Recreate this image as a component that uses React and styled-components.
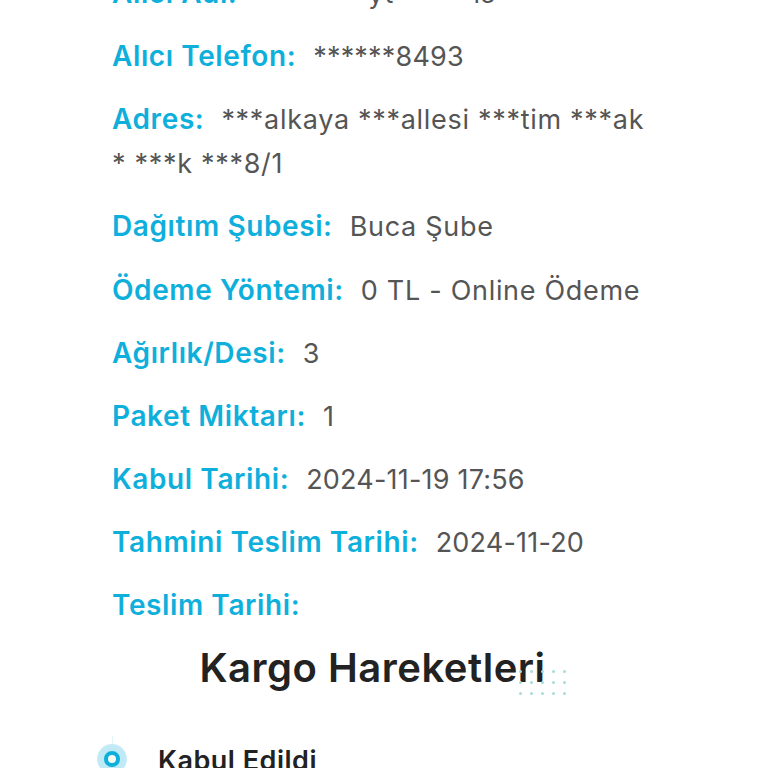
import React from 'react';
import styled, { createGlobalStyle } from 'styled-components';

const rows = [
	{ label: 'Alıcı Adı:', value: '********yt*** **ıs' },
	{ label: 'Alıcı Telefon:', value: '******8493', numeric: true },
	{ label: 'Adres:', value: '***alkaya ***allesi ***tim ***ak * ***k ***8/1' },
	{ label: 'Dağıtım Şubesi:', value: 'Buca Şube' },
	{ label: 'Ödeme Yöntemi:', value: '0 TL - Online Ödeme' },
	{ label: 'Ağırlık/Desi:', value: '3', numeric: true },
	{ label: 'Paket Miktarı:', value: '1', numeric: true },
	{ label: 'Kabul Tarihi:', value: '2024-11-19 17:56', numeric: true },
	{ label: 'Tahmini Teslim Tarihi:', value: '2024-11-20', numeric: true },
	{ label: 'Teslim Tarihi:', value: '' },
];

const dots = Array.from({ length: 15 });

const App = () => (
	<>
		<GlobalStyle />
		<Page>
			<Content>
				<InfoList>
					{rows.map((row) => (
						<InfoRow key={row.label} $numeric={row.numeric}>
							<InfoLabel>{row.label}</InfoLabel>
							{row.value}
						</InfoRow>
					))}
				</InfoList>
				<SectionHeading>
					<HeadingText>
						Kargo Hareketleri
						<DotPattern>
							{dots.map((_, i) => (
								<Dot key={i} />
							))}
						</DotPattern>
					</HeadingText>
				</SectionHeading>
				<Timeline>
					<TimelineMarker>
						<MarkerRing />
					</TimelineMarker>
					<TimelineTitle>Kabul Edildi</TimelineTitle>
				</Timeline>
			</Content>
		</Page>
	</>
);

const GlobalStyle = createGlobalStyle`
	html, body {
		margin: 0;
		padding: 0;
		background: #fff;
		overflow: hidden;
	}
`;

const Page = styled.div`
	height: 768px;
	overflow: hidden;
	font-family: Inter, "Noto Sans", sans-serif;
`;

const Content = styled.div`
	margin-top: -28px;
	padding: 0 112px;
`;

const InfoList = styled.div`
	display: flex;
	flex-direction: column;
	gap: 19.15px;
`;

const InfoRow = styled.div`
	font-size: 27px;
	line-height: 44px;
	color: #555;
	letter-spacing: ${(props) => (props.$numeric ? '0.2px' : '0.7px')};
`;

const InfoLabel = styled.span`
	color: #0fafdc;
	font-size: 28px;
	line-height: 1;
	font-weight: 600;
	letter-spacing: 0.6px;
	margin-right: 17px;
`;

const SectionHeading = styled.div`
	display: flex;
	justify-content: center;
	margin-top: 14px;
	margin-right: 23px;
`;

const HeadingText = styled.h2`
	position: relative;
	margin: 0;
	font-size: 40px;
	line-height: 52px;
	font-weight: 600;
	color: #222;
	letter-spacing: 0.5px;
`;

const DotPattern = styled.div`
	position: absolute;
	right: -20px;
	bottom: -1px;
	display: grid;
	grid-template-columns: repeat(5, 3px);
	gap: 8px;
`;

const Dot = styled.span`
	width: 3px;
	height: 3px;
	border-radius: 50%;
	background: #a6dcdc;
`;

const Timeline = styled.div`
	display: flex;
	align-items: flex-start;
	gap: 31px;
	margin-top: 49px;
	margin-left: -15px;
`;

const TimelineMarker = styled.div`
	position: relative;
	display: flex;
	align-items: center;
	justify-content: center;
	width: 30px;
	height: 30px;
	margin-top: 1px;
	border-radius: 50%;
	background: radial-gradient(circle, #bfe9f5 55%, #d3f0f8 100%);
	flex-shrink: 0;

	&::before {
		content: '';
		position: absolute;
		left: 50%;
		bottom: 100%;
		width: 1px;
		height: 8px;
		background: #e3f5fa;
	}
`;

const MarkerRing = styled.div`
	width: 8px;
	height: 8px;
	border: 4px solid #0fafdc;
	border-radius: 50%;
	background: #f6fbf4;
`;

const TimelineTitle = styled.div`
	font-size: 27px;
	line-height: 36px;
	font-weight: 600;
	color: #222;
	letter-spacing: 0.5px;
`;

export default App;
